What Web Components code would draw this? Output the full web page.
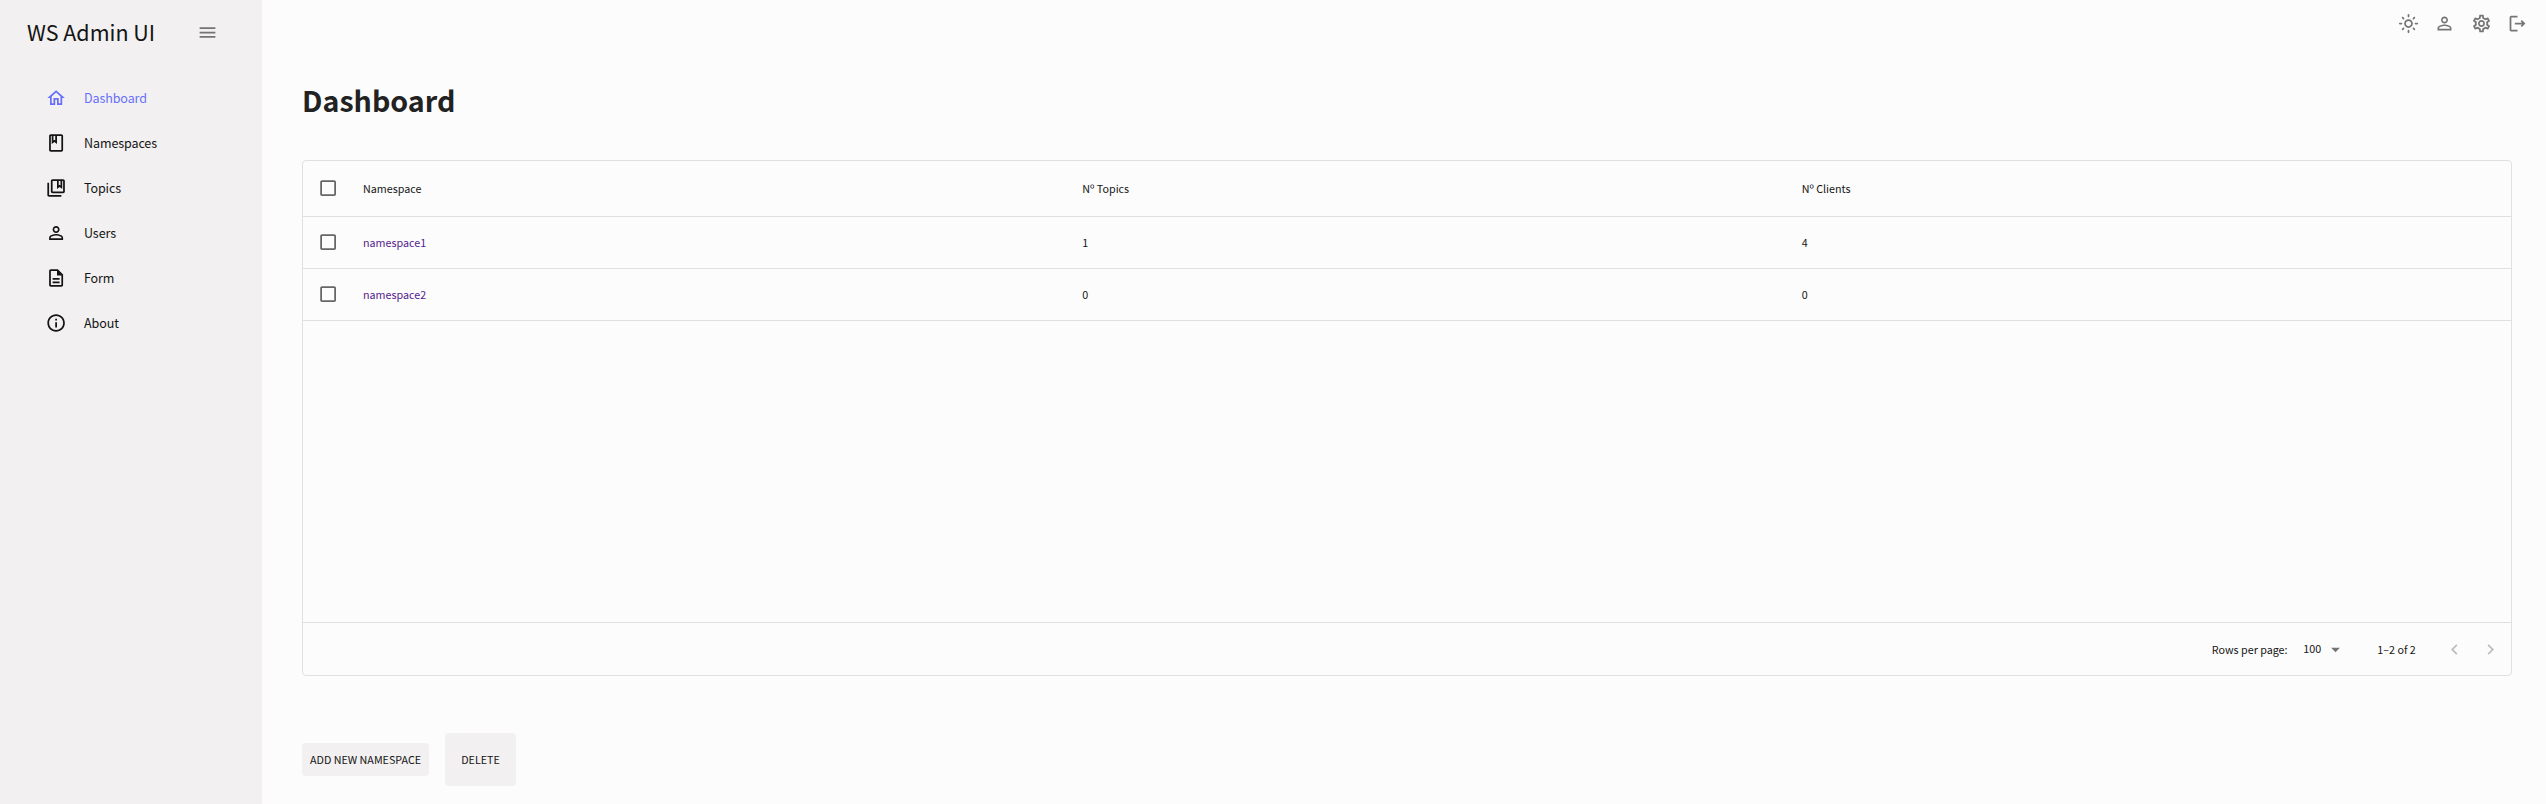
<!DOCTYPE html>
<html lang="en">
<head>
<meta charset="utf-8">
<title>WS Admin UI</title>
<style>
html,body{margin:0;height:100%;background:#fcfcfc;color:#141414}
body{font-family:"Noto Sans CJK SC","Noto Sans",sans-serif;font-size:12.5px}
</style>
</head>
<body>
<ws-app></ws-app>
<script>
const ICONS = {
  menu: 'M3 18h18v-2H3v2zm0-5h18v-2H3v2zm0-7v2h18V6H3z',
  home: 'm12 5.69 5 4.5V18h-2v-6H9v6H7v-7.81l5-4.5M12 3 2 12h3v8h6v-6h2v6h6v-8h3L12 3z',
  book: 'M18 2H6c-1.1 0-2 .9-2 2v16c0 1.1.9 2 2 2h12c1.1 0 2-.9 2-2V4c0-1.1-.9-2-2-2zM9 4h2v5l-1-.75L9 9V4zm9 16H6V4h1v9l3-2.25L13 13V4h5v16z',
  books: 'M4 6H2v14c0 1.1.9 2 2 2h14v-2H4V6zm16-4H8c-1.1 0-2 .9-2 2v12c0 1.1.9 2 2 2h12c1.1 0 2-.9 2-2V4c0-1.1-.9-2-2-2zm-3 2v5l-1-.75L15 9V4h2zm3 12H8V4h5v9l3-2.25L19 13V4h1v12z',
  person: 'M12 5.9c1.16 0 2.1.94 2.1 2.1s-.94 2.1-2.1 2.1S9.9 9.16 9.9 8s.94-2.1 2.1-2.1m0 9c2.97 0 6.1 1.46 6.1 2.1v1.1H5.9V17c0-.64 3.13-2.1 6.1-2.1M12 4C9.79 4 8 5.79 8 8s1.79 4 4 4 4-1.79 4-4-1.79-4-4-4zm0 9c-2.67 0-8 1.34-8 4v3h16v-3c0-2.66-5.33-4-8-4z',
  form: 'M8 16h8v2H8zm0-4h8v2H8zm6-10H6c-1.1 0-2 .9-2 2v16c0 1.1.89 2 1.99 2H18c1.1 0 2-.9 2-2V8l-6-6zm4 18H6V4h7v5h5v11z',
  info: 'M11 7h2v2h-2zm0 4h2v6h-2zm1-9C6.48 2 2 6.48 2 12s4.48 10 10 10 10-4.48 10-10S17.52 2 12 2zm0 18c-4.41 0-8-3.59-8-8s3.59-8 8-8 8 3.59 8 8-3.59 8-8 8z',
  sun: 'M12 9c1.65 0 3 1.35 3 3s-1.35 3-3 3-3-1.35-3-3 1.35-3 3-3m0-2c-2.76 0-5 2.24-5 5s2.24 5 5 5 5-2.24 5-5-2.24-5-5-5zM2 13h2c.55 0 1-.45 1-1s-.45-1-1-1H2c-.55 0-1 .45-1 1s.45 1 1 1zm18 0h2c.55 0 1-.45 1-1s-.45-1-1-1h-2c-.55 0-1 .45-1 1s.45 1 1 1zM11 2v2c0 .55.45 1 1 1s1-.45 1-1V2c0-.55-.45-1-1-1s-1 .45-1 1zm0 18v2c0 .55.45 1 1 1s1-.45 1-1v-2c0-.55-.45-1-1-1s-1 .45-1 1zM5.99 4.58c-.39-.39-1.03-.39-1.41 0-.39.39-.39 1.03 0 1.41l1.06 1.06c.39.39 1.03.39 1.41 0s.39-1.03 0-1.41L5.99 4.58zm12.37 12.37c-.39-.39-1.03-.39-1.41 0-.39.39-.39 1.03 0 1.41l1.06 1.06c.39.39 1.03.39 1.41 0 .39-.39.39-1.03 0-1.41l-1.06-1.06zm1.06-10.96c.39-.39.39-1.03 0-1.41-.39-.39-1.03-.39-1.41 0l-1.06 1.06c-.39.39-.39 1.03 0 1.41s1.03.39 1.41 0l1.06-1.06zM7.05 18.36c.39-.39.39-1.03 0-1.41-.39-.39-1.03-.39-1.41 0l-1.06 1.06c-.39.39-.39 1.03 0 1.41s1.03.39 1.41 0l1.06-1.06z',
  gear: 'M19.43 12.98c.04-.32.07-.64.07-.98 0-.34-.03-.66-.07-.98l2.11-1.65c.19-.15.24-.42.12-.64l-2-3.46c-.09-.16-.26-.25-.44-.25-.06 0-.12.01-.17.03l-2.49 1c-.52-.4-1.08-.73-1.69-.98l-.38-2.65C14.46 2.18 14.25 2 14 2h-4c-.25 0-.46.18-.49.42l-.38 2.65c-.61.25-1.17.59-1.69.98l-2.49-1c-.06-.02-.12-.03-.18-.03-.17 0-.34.09-.43.25l-2 3.46c-.13.22-.07.49.12.64l2.11 1.65c-.04.32-.07.65-.07.98 0 .33.03.66.07.98l-2.11 1.65c-.19.15-.24.42-.12.64l2 3.46c.09.16.26.25.44.25.06 0 .12-.01.17-.03l2.49-1c.52.4 1.08.73 1.69.98l.38 2.65c.03.24.24.42.49.42h4c.25 0 .46-.18.49-.42l.38-2.65c.61-.25 1.17-.59 1.69-.98l2.49 1c.06.02.12.03.18.03.17 0 .34-.09.43-.25l2-3.46c.12-.22.07-.49-.12-.64l-2.11-1.65zm-1.98-1.71c.04.31.05.52.05.73 0 .21-.02.43-.05.73l-.14 1.13.89.7 1.08.84-.7 1.21-1.27-.51-1.04-.42-.9.68c-.43.32-.84.56-1.25.73l-1.06.43-.16 1.13-.2 1.35h-1.4l-.19-1.35-.16-1.13-1.06-.43c-.43-.18-.83-.41-1.23-.71l-.91-.7-1.06.43-1.27.51-.7-1.21 1.08-.84.89-.7-.14-1.13c-.03-.31-.05-.54-.05-.74s.02-.43.05-.73l.14-1.13-.89-.7-1.08-.84.7-1.21 1.27.51 1.04.42.9-.68c.43-.32.84-.56 1.25-.73l1.06-.43.16-1.13.2-1.35h1.39l.19 1.35.16 1.13 1.06.43c.43.18.83.41 1.23.71l.91.7 1.06-.43 1.27-.51.7 1.21-1.07.85-.89.7.14 1.13zM12 8c-2.21 0-4 1.79-4 4s1.79 4 4 4 4-1.79 4-4-1.79-4-4-4zm0 6c-1.1 0-2-.9-2-2s.9-2 2-2 2 .9 2 2-.9 2-2 2z',
  logout: 'm17 8-1.41 1.41L17.17 11H9v2h8.17l-1.58 1.58L17 16l4-4-4-4zM5 5h7V3H5c-1.1 0-2 .9-2 2v14c0 1.1.9 2 2 2h7v-2H5V5z',
  box: 'M19 5v14H5V5h14m0-2H5c-1.1 0-2 .9-2 2v14c0 1.1.9 2 2 2h14c1.1 0 2-.9 2-2V5c0-1.1-.9-2-2-2z',
  drop: 'M7 10l5 5 5-5z',
  left: 'M15.41 16.59 10.83 12l4.58-4.59L14 6l-6 6 6 6 1.41-1.41z',
  right: 'M8.59 16.59 13.17 12 8.59 7.41 10 6l6 6-6 6-1.41-1.41z'
};

function define(name, markup, connected) {
  const template = document.createElement('template');
  template.innerHTML = markup;
  customElements.define(name, class extends HTMLElement {
    constructor() {
      super();
      this.attachShadow({ mode: 'open' }).append(template.content.cloneNode(true));
    }
    connectedCallback() { if (connected) connected(this, this.shadowRoot); }
  });
}

define('ws-icon', `
<style>:host{display:block;flex:none;width:21px;height:21px}svg{display:block;width:100%;height:100%;fill:currentColor}</style>
<svg viewBox="0 0 24 24"><path/></svg>`,
(el, root) => root.querySelector('path').setAttribute('d', ICONS[el.getAttribute('name')]));

define('ws-nav-item', `
<style>
:host{display:flex;align-items:flex-start;height:45px;padding-left:46px;color:#141414;font-size:12.53px;letter-spacing:-.1px}
:host([active]){color:#6870fa}
ws-icon{margin-top:12px;transform:translate(-.4px,-.5px)}
span{margin:12px 0 0 17px;line-height:20px}
</style>
<ws-icon></ws-icon><span><slot></slot></span>`,
(el, root) => {
  const icon = document.createElement('ws-icon');
  icon.setAttribute('name', el.getAttribute('icon'));
  root.querySelector('ws-icon').replaceWith(icon);
});

define('ws-sidebar', `
<style>
:host{display:block;width:262px;flex:none;background:#f2f0f0}
header{display:flex;align-items:center;height:65px;padding-left:27px;box-sizing:border-box}
h1{margin:0;font-weight:400;font-size:21.48px;line-height:32px;padding-bottom:2px;width:170px;white-space:nowrap}
header ws-icon{color:#757374}
nav{padding-top:11px}
</style>
<header><h1>WS Admin UI</h1><ws-icon name="menu"></ws-icon></header>
<nav>
<ws-nav-item icon="home" active>Dashboard</ws-nav-item>
<ws-nav-item icon="book">Namespaces</ws-nav-item>
<ws-nav-item icon="books">Topics</ws-nav-item>
<ws-nav-item icon="person">Users</ws-nav-item>
<ws-nav-item icon="form">Form</ws-nav-item>
<ws-nav-item icon="info">About</ws-nav-item>
</nav>`);

define('ws-topbar', `
<style>:host{display:flex;justify-content:flex-end;gap:15.33px;padding:13px 18px 0 0;height:50px;box-sizing:border-box;color:#757575}</style>
<ws-icon name="sun"></ws-icon><ws-icon name="person"></ws-icon><ws-icon name="gear"></ws-icon><ws-icon name="logout"></ws-icon>`);

define('ws-row', `
<style>
:host{display:grid;grid-template-columns:50px repeat(3,1fr);align-items:center;height:51px;border-bottom:1px solid #e0e0e0;font-size:10.74px}
:host([head]){height:55px}
ws-icon{margin-left:15px;transform:translate(-.4px,-.4px);color:#666}
::slotted(*){padding:0 0 0 10px;line-height:20px}
::slotted(a){color:#551a8b;text-decoration:none}
</style>
<ws-icon name="box"></ws-icon><slot></slot>`);

define('ws-pagination', `
<style>
:host{display:flex;align-items:center;justify-content:flex-end;height:52px;border-top:1px solid #e0e0e0;font-size:10.74px;line-height:20px;white-space:nowrap}
.label{width:91.5px;padding-top:2px}.size{width:21.7px}.drop{color:#757575}.range{width:66.7px;margin-left:31.3px;padding-top:2px}
.arrow{color:#bdbdbd}.arrow+.arrow{margin:0 10px 0 15px}
</style>
<span class="label">Rows per page:</span><span class="size">100</span><ws-icon class="drop" name="drop"></ws-icon>
<span class="range">1–2 of 2</span><ws-icon class="arrow" name="left"></ws-icon><ws-icon class="arrow" name="right"></ws-icon>`);

define('ws-table', `
<style>:host{display:flex;flex-direction:column;height:516px;box-sizing:border-box;border:1px solid #e0e0e0;border-radius:4px}.body{flex:1}</style>
<div class="body"><slot></slot></div><ws-pagination></ws-pagination>`);

define('ws-button', `
<style>
:host{display:block}
button{display:block;border:0;border-radius:4px;background:#f2f0f0;color:#141414;font:inherit;font-size:10.74px;line-height:21px;padding:6px 8px;width:127px;height:33px;white-space:nowrap}
:host([large]) button{width:71px;height:53px}
</style>
<button><slot></slot></button>`);

define('ws-app', `
<style>
:host{display:flex;height:804px;overflow:hidden}
main{flex:1;min-width:0}
section{padding:0 34px 0 40px}
h2{margin:0;height:110px;padding-top:27px;box-sizing:border-box;font-size:28.65px;font-weight:700;line-height:46px;color:#222}
.actions{display:flex;align-items:center;gap:16px;margin-top:57px}
</style>
<ws-sidebar></ws-sidebar>
<main>
<ws-topbar></ws-topbar>
<section>
<h2>Dashboard</h2>
<ws-table>
<ws-row head><span>Namespace</span><span>Nº Topics</span><span>Nº Clients</span></ws-row>
<ws-row><a>namespace1</a><span>1</span><span>4</span></ws-row>
<ws-row><a>namespace2</a><span>0</span><span>0</span></ws-row>
</ws-table>
<div class="actions"><ws-button>ADD NEW NAMESPACE</ws-button><ws-button large>DELETE</ws-button></div>
</section>
</main>`);
</script>
</body>
</html>
